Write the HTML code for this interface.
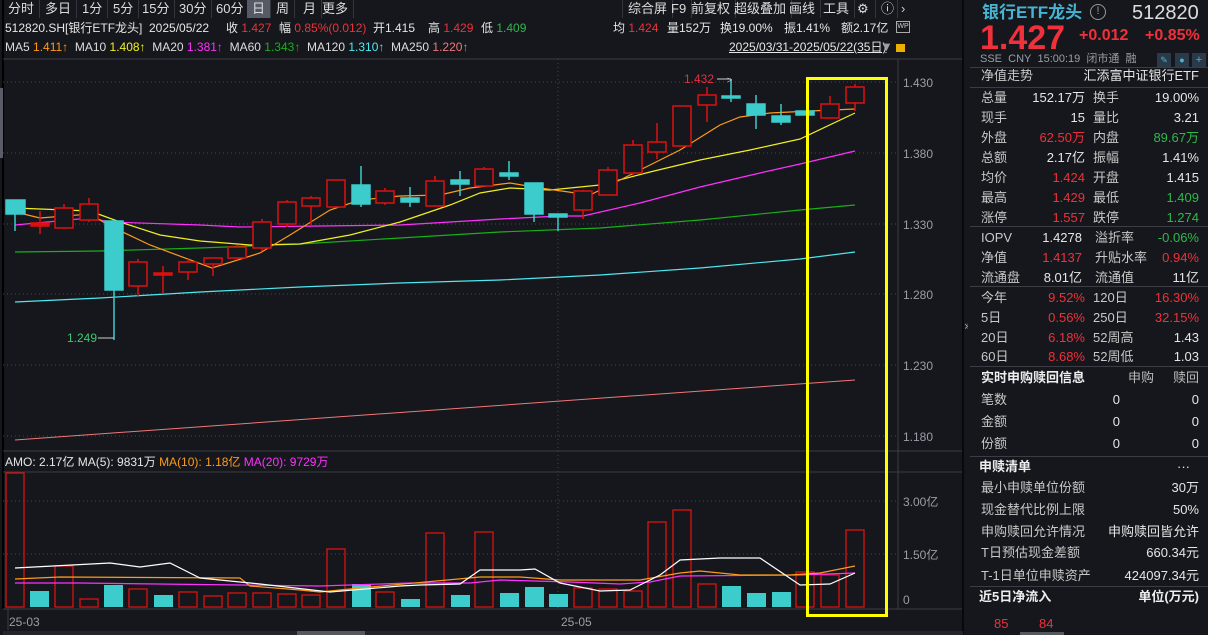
<!DOCTYPE html>
<html><head><meta charset="utf-8">
<style>
*{margin:0;padding:0;box-sizing:border-box}
body{width:1208px;height:635px;background:#15171c;overflow:hidden;position:relative;font-family:"Liberation Sans","Noto Sans CJK SC",sans-serif;font-size:13px;color:#d8d8d8}
.a{position:absolute;white-space:nowrap;line-height:18px}
.r{color:#f0303a}.g{color:#2fb84a}.w{color:#e6e6e6}.gr{color:#9a9ea6}
.r2{font-size:12px}
.tab{position:absolute;top:0;height:18px;line-height:18px;font-size:13px;color:#ddd;border-right:1px solid #33363d;padding:0 5px}
.row{position:absolute;left:970px;width:238px;height:20px;line-height:20px;font-size:13px}
.row span{position:absolute}
.l1{left:11px;color:#c8c8c8}.v1{right:123px;text-align:right}.l2{left:123px;color:#c8c8c8}.v2{right:9px;text-align:right}
.sep{position:absolute;left:970px;width:238px;height:1px;background:#3a3d44}
.b{font-weight:bold;color:#eee}
</style></head><body>
<!-- top tabs -->
<div class="tab" style="left:3px">分时</div>
<div class="tab" style="left:40px">多日</div>
<div class="tab" style="left:77px">1分</div>
<div class="tab" style="left:108px">5分</div>
<div class="tab" style="left:137px">15分</div>
<div class="tab" style="left:174px">30分</div>
<div class="tab" style="left:211px">60分</div>
<div class="tab" style="left:247px;background:#555a66;width:24px">日</div>
<div class="tab" style="left:271px">周</div>
<div class="tab" style="left:298px">月</div>
<div class="tab" style="left:317px">更多</div>
<div class="tab" style="left:622px;border-left:1px solid #33363d">综合屏</div>
<div class="tab" style="left:666px">F9</div>
<div class="tab" style="left:686px">前复权</div>
<div class="tab" style="left:729px">超级叠加</div>
<div class="tab" style="left:784px">画线</div>
<div class="tab" style="left:818px">工具</div>
<div class="tab" style="left:852px;width:24px">⚙</div>
<div class="tab" style="left:876px;width:22px">ⓘ</div>
<div class="a" style="left:901px;top:0;color:#ccc">›</div>
<!-- row2 -->
<div class="a w r2" style="left:5px;top:19px">512820.SH[银行ETF龙头]</div>
<div class="a w r2" style="left:149px;top:19px">2025/05/22</div>
<div class="a w r2" style="left:226px;top:19px">收 <span class="r">1.427</span></div>
<div class="a w r2" style="left:279px;top:19px">幅 <span class="r">0.85%(0.012)</span></div>
<div class="a w r2" style="left:373px;top:19px">开1.415</div>
<div class="a w r2" style="left:428px;top:19px">高 <span class="r">1.429</span></div>
<div class="a w r2" style="left:481px;top:19px">低 <span class="g">1.409</span></div>
<div class="a w r2" style="left:613px;top:19px">均 <span class="r">1.424</span></div>
<div class="a w r2" style="left:667px;top:19px">量152万</div>
<div class="a w r2" style="left:720px;top:19px">换19.00%</div>
<div class="a w r2" style="left:784px;top:19px">振1.41%</div>
<div class="a w r2" style="left:841px;top:19px">额2.17亿</div>
<div class="a" style="left:896px;top:21px;width:14px;height:12px;border:1px solid #aaa;font-size:7px;line-height:10px;text-align:center;color:#ccc">WP</div>
<!-- row3 -->
<div class="a" style="left:5px;top:38px;font-size:12px;color:#ddd">MA5 <span style="color:#ff9a1a">1.411↑</span>&nbsp; MA10 <span style="color:#f0f020">1.408↑</span>&nbsp; MA20 <span style="color:#ff30ff">1.381↑</span>&nbsp; MA60 <span style="color:#18b018">1.343↑</span>&nbsp; MA120 <span style="color:#50e8f0">1.310↑</span>&nbsp; MA250 <span style="color:#f07878">1.220↑</span></div>
<div class="a w" style="left:729px;top:38px;font-size:12px;text-decoration:underline">2025/03/31-2025/05/22(35日)</div>
<div class="a gr" style="left:880px;top:38px">▼</div>
<div class="a" style="left:896px;top:44px;width:9px;height:8px;background:#e8b000"></div>

<svg style="position:absolute;left:0;top:0" width="968" height="635">
<line x1="3" y1="0" x2="3" y2="609" stroke="#000" stroke-width="2"/>
<rect x="0" y="88" width="3" height="70" fill="#5a5d68"/>
<line x1="3" y1="59" x2="962" y2="59" stroke="#3a3d44"/>
<line x1="898" y1="59" x2="898" y2="609" stroke="#3a3d44"/>
<line x1="963" y1="0" x2="963" y2="635" stroke="#08090b" stroke-width="2"/>
<g stroke="#444850" stroke-dasharray="1,3">
<line x1="3" y1="82" x2="898" y2="82"/><line x1="3" y1="153" x2="898" y2="153"/><line x1="3" y1="224" x2="898" y2="224"/><line x1="3" y1="294" x2="898" y2="294"/><line x1="3" y1="365" x2="898" y2="365"/><line x1="3" y1="436" x2="898" y2="436"/>
<line x1="558" y1="59" x2="558" y2="609"/>
<line x1="3" y1="501" x2="898" y2="501"/><line x1="3" y1="554" x2="898" y2="554"/>
</g>
<g fill="#9a9ea6" font-size="12" font-family="Liberation Sans,Noto Sans CJK SC,sans-serif">
<text x="903" y="87">1.430</text><text x="903" y="158">1.380</text><text x="903" y="229">1.330</text><text x="903" y="299">1.280</text><text x="903" y="370">1.230</text><text x="903" y="441">1.180</text>
<text x="903" y="506">3.00亿</text><text x="903" y="559">1.50亿</text><text x="903" y="604">0</text>
<text x="9" y="626">25-03</text><text x="561" y="626">25-05</text>
</g>
<line x1="3" y1="451" x2="962" y2="451" stroke="#3a3d44"/>
<line x1="3" y1="472" x2="962" y2="472" stroke="#3a3d44"/>
<line x1="3" y1="609" x2="962" y2="609" stroke="#3a3d44"/>
<line x1="8" y1="609" x2="8" y2="630" stroke="#3a3d44"/>
<rect x="3" y="631" width="960" height="4" fill="#22252c"/>
<rect x="297" y="631" width="68" height="4" fill="#55585f"/>
<text x="5" y="466" font-size="12" fill="#e6e6e6" font-family="Liberation Sans,Noto Sans CJK SC,sans-serif">AMO: 2.17亿 MA(5): 9831万 <tspan fill="#ff9a1a">MA(10): 1.18亿</tspan> <tspan fill="#ff30ff">MA(20): 9729万</tspan></text>

<polyline fill="none" stroke="#f07878" stroke-width="1" points="15,440 855,380"/>
<polyline fill="none" stroke="#50e8f0" stroke-width="1.2" points="15,302 100,298 200,292 300,287 400,283 500,280 600,275 700,268 800,259 855,252"/>
<polyline fill="none" stroke="#18b018" stroke-width="1.2" points="15,252 100,251 200,248 300,244 400,238 500,232 600,228 700,220 800,210 855,205"/>
<polyline fill="none" stroke="#ff30ff" stroke-width="1.2" points="15,225 90,218 110,222 200,225 240,227 320,226 400,225 450,222 500,219 560,216 583,216 640,203 700,187 760,173 800,164 855,151"/>
<polyline fill="none" stroke="#f0f020" stroke-width="1.2" points="15,208 90,211 120,222 160,235 200,241 250,245 300,244 350,235 400,222 450,205 480,193 510,188 550,190 600,185 650,172 700,160 750,150 800,139 855,113"/>
<polyline fill="none" stroke="#ff9a1a" stroke-width="1.2" points="15,212 40,218 90,214 110,226 150,245 212,268 260,253 290,235 330,210 360,200 400,196 440,195 470,188 510,183 540,188 590,195 640,170 680,150 720,125 740,117 770,113 810,111 855,109"/>

<g stroke="#dd1111" stroke-width="1.5" fill="none">
<line x1="40" y1="211" x2="40" y2="234"/><rect x="31" y="223" width="18" height="3" fill="#dd1111"/>
<line x1="64" y1="204" x2="64" y2="228"/><rect x="55" y="208" width="18" height="20" fill="#15171c"/>
<line x1="89" y1="198" x2="89" y2="222"/><rect x="80" y="204" width="18" height="16" fill="#15171c"/>
<line x1="138" y1="259" x2="138" y2="296"/><rect x="129" y="262" width="18" height="24" fill="#15171c"/>
<line x1="163" y1="266" x2="163" y2="293"/><rect x="154" y="273" width="18" height="2" fill="#dd1111"/>
<line x1="188" y1="259" x2="188" y2="280"/><rect x="179" y="262" width="18" height="10" fill="#15171c"/>
<line x1="213" y1="258" x2="213" y2="276"/><rect x="204" y="258" width="18" height="6" fill="#15171c"/>
<line x1="237" y1="245" x2="237" y2="260"/><rect x="228" y="247" width="18" height="11" fill="#15171c"/>
<line x1="262" y1="219" x2="262" y2="251"/><rect x="253" y="222" width="18" height="26" fill="#15171c"/>
<line x1="287" y1="200" x2="287" y2="227"/><rect x="278" y="202" width="18" height="22" fill="#15171c"/>
<line x1="311" y1="196" x2="311" y2="226"/><rect x="302" y="198" width="18" height="8" fill="#15171c"/>
<rect x="327" y="180" width="18" height="27" fill="#15171c"/>
<line x1="385" y1="188" x2="385" y2="205"/><rect x="376" y="191" width="18" height="12" fill="#15171c"/>
<line x1="435" y1="176" x2="435" y2="206"/><rect x="426" y="181" width="18" height="25" fill="#15171c"/>
<line x1="484" y1="167" x2="484" y2="186"/><rect x="475" y="169" width="18" height="17" fill="#15171c"/>
<line x1="583" y1="190" x2="583" y2="219"/><rect x="574" y="191" width="18" height="19" fill="#15171c"/>
<line x1="608" y1="167" x2="608" y2="195"/><rect x="599" y="170" width="18" height="25" fill="#15171c"/>
<line x1="633" y1="140" x2="633" y2="175"/><rect x="624" y="145" width="18" height="28" fill="#15171c"/>
<line x1="657" y1="123" x2="657" y2="159"/><rect x="648" y="142" width="18" height="10" fill="#15171c"/>
<rect x="673" y="106" width="18" height="40" fill="#15171c"/>
<line x1="707" y1="87" x2="707" y2="122"/><rect x="698" y="95" width="18" height="10" fill="#15171c"/>
<line x1="830" y1="96" x2="830" y2="118"/><rect x="821" y="104" width="18" height="14" fill="#15171c"/>
<line x1="855" y1="84" x2="855" y2="111"/><rect x="846" y="87" width="18" height="16" fill="#15171c"/>
</g>
<g stroke="#3ccccc" stroke-width="1.5" fill="#3ccccc">
<line x1="15" y1="200" x2="15" y2="231"/><rect x="6" y="200" width="19" height="14"/>
<line x1="114" y1="221" x2="114" y2="340"/><rect x="105" y="221" width="18" height="69"/>
<line x1="361" y1="166" x2="361" y2="207"/><rect x="352" y="185" width="18" height="19"/>
<line x1="410" y1="187" x2="410" y2="207"/><rect x="401" y="198" width="18" height="4"/>
<line x1="460" y1="171" x2="460" y2="196"/><rect x="451" y="180" width="18" height="4"/>
<line x1="509" y1="161" x2="509" y2="180"/><rect x="500" y="173" width="18" height="3"/>
<line x1="534" y1="183" x2="534" y2="222"/><rect x="525" y="183" width="18" height="31"/>
<line x1="558" y1="214" x2="558" y2="231"/><rect x="549" y="214" width="18" height="3"/>
<line x1="731" y1="79" x2="731" y2="102"/><rect x="722" y="96" width="18" height="2"/>
<line x1="756" y1="95" x2="756" y2="129"/><rect x="747" y="104" width="18" height="11"/>
<line x1="781" y1="104" x2="781" y2="125"/><rect x="772" y="116" width="18" height="6"/>
<rect x="796" y="111" width="18" height="4"/>
</g>
<g font-size="12" font-family="Liberation Sans,sans-serif">
<text x="684" y="83" fill="#e03040">1.432</text><polyline points="717,79 731,79" stroke="#ccc" fill="none"/><text x="727" y="83" fill="#ccc" font-size="9">&gt;</text>
<text x="67" y="342" fill="#3cc870">1.249</text><polyline points="98,338 114,338" stroke="#ccc" fill="none"/>
</g>

<g stroke="#dd1111" stroke-width="1.3" fill="none">
<rect x="6" y="473" width="18" height="134"/><rect x="55" y="566" width="18" height="41"/><rect x="80" y="599" width="18" height="8"/>
<rect x="129" y="589" width="18" height="18"/><rect x="179" y="592" width="18" height="15"/><rect x="204" y="596" width="18" height="11"/>
<rect x="228" y="593" width="18" height="14"/><rect x="253" y="593" width="18" height="14"/><rect x="278" y="594" width="18" height="13"/>
<rect x="302" y="595" width="18" height="12"/><rect x="327" y="549" width="18" height="58"/><rect x="376" y="592" width="18" height="15"/>
<rect x="426" y="533" width="18" height="74"/><rect x="475" y="532" width="18" height="75"/><rect x="574" y="588" width="18" height="19"/>
<rect x="599" y="589" width="18" height="18"/><rect x="624" y="591" width="18" height="16"/><rect x="648" y="522" width="18" height="85"/>
<rect x="673" y="510" width="18" height="97"/><rect x="698" y="584" width="18" height="23"/><rect x="796" y="572" width="18" height="35"/>
<rect x="821" y="575" width="18" height="32"/><rect x="846" y="530" width="18" height="77"/>
</g>
<g fill="#3ccccc">
<rect x="30" y="591" width="19" height="16"/><rect x="104" y="585" width="19" height="22"/><rect x="154" y="595" width="19" height="12"/>
<rect x="352" y="584" width="19" height="23"/><rect x="401" y="599" width="19" height="8"/><rect x="451" y="595" width="19" height="12"/>
<rect x="500" y="593" width="19" height="14"/><rect x="525" y="587" width="19" height="20"/><rect x="549" y="594" width="19" height="13"/>
<rect x="722" y="586" width="19" height="21"/><rect x="747" y="593" width="19" height="14"/><rect x="772" y="592" width="19" height="15"/>
</g>
<polyline fill="none" stroke="#ff30ff" stroke-width="1.2" points="15,583 80,583 240,585 320,586 410,583 470,583 500,580 570,582 620,584 650,582 680,576 800,575 855,573"/>
<polyline fill="none" stroke="#ff9a1a" stroke-width="1.2" points="15,579 60,577 240,578 250,586 300,590 320,592 360,588 480,577 520,577 560,580 640,580 680,573 700,571 720,573 740,575 790,575 820,573 855,566"/>
<polyline fill="none" stroke="#ffffff" stroke-width="1.2" points="15,568 110,563 140,567 170,563 200,578 260,584 330,592 400,586 420,585 460,584 480,570 520,570 535,569 560,583 600,591 630,590 660,575 680,560 720,558 760,558 800,585 830,584 855,573"/>

<rect x="807.5" y="78.5" width="79" height="537" fill="none" stroke="#ffff00" stroke-width="3"/>
<text x="964" y="330" fill="#aaa" font-size="12" font-family="DejaVu Sans,sans-serif">»</text>
</svg>

<!-- right panel -->
<div class="a" style="left:982px;top:2px;font-size:17px;font-weight:bold;color:#46b4d2;line-height:22px">银行ETF龙头</div>
<div class="a" style="left:1090px;top:4px;width:16px;height:16px;border:1.5px solid #999;border-radius:50%;font-size:11px;line-height:13px;text-align:center;color:#999">!</div>
<div class="a" style="left:1132px;top:1px;font-size:20px;color:#ddd;line-height:24px">512820</div>
<div class="a" style="left:980px;top:20px;font-size:34px;font-weight:bold;color:#f0303a;line-height:36px">1.427</div>
<div class="a" style="left:1079px;top:27px;font-size:16px;font-weight:bold;color:#f0303a">+0.012</div>
<div class="a" style="left:1145px;top:27px;font-size:16px;font-weight:bold;color:#f0303a">+0.85%</div>
<div class="a gr" style="left:980px;top:50px;font-size:11px">SSE&nbsp; CNY&nbsp; 15:00:19&nbsp; 闭市通&nbsp; 融</div>
<div class="a" style="left:1157px;top:53px;width:14px;height:14px;background:#2a3a48;color:#46b4d2;font-size:9px;line-height:14px;text-align:center">✎</div>
<div class="a" style="left:1175px;top:53px;width:14px;height:14px;background:#2a3a48;color:#46b4d2;font-size:9px;line-height:14px;text-align:center">●</div>
<div class="a" style="left:1192px;top:53px;width:14px;height:14px;background:#2a3a48;color:#46b4d2;font-size:11px;line-height:14px;text-align:center">+</div>
<div class="sep" style="top:67px"></div>
<div class="row" style="top:66px"><span class="l1">净值走势</span><span class="v2 w">汇添富中证银行ETF</span></div>
<div class="sep" style="top:87px"></div>
<div class="row" style="top:88px"><span class="l1">总量</span><span class="v1 w">152.17万</span><span class="l2">换手</span><span class="v2 w">19.00%</span></div>
<div class="row" style="top:108px"><span class="l1">现手</span><span class="v1 w">15</span><span class="l2">量比</span><span class="v2 w">3.21</span></div>
<div class="row" style="top:128px"><span class="l1">外盘</span><span class="v1 r">62.50万</span><span class="l2">内盘</span><span class="v2 g">89.67万</span></div>
<div class="row" style="top:148px"><span class="l1">总额</span><span class="v1 w">2.17亿</span><span class="l2">振幅</span><span class="v2 w">1.41%</span></div>
<div class="row" style="top:168px"><span class="l1">均价</span><span class="v1 r">1.424</span><span class="l2">开盘</span><span class="v2 w">1.415</span></div>
<div class="row" style="top:188px"><span class="l1">最高</span><span class="v1 r">1.429</span><span class="l2">最低</span><span class="v2 g">1.409</span></div>
<div class="row" style="top:208px"><span class="l1">涨停</span><span class="v1 r">1.557</span><span class="l2">跌停</span><span class="v2 g">1.274</span></div>
<div class="sep" style="top:226px"></div>
<div class="row" style="top:228px"><span class="l1">IOPV</span><span class="v1 w" style="right:126px">1.4278</span><span class="l2" style="left:125px">溢折率</span><span class="v2 g">-0.06%</span></div>
<div class="row" style="top:248px"><span class="l1">净值</span><span class="v1 r" style="right:126px">1.4137</span><span class="l2" style="left:125px">升贴水率</span><span class="v2 r">0.94%</span></div>
<div class="row" style="top:268px"><span class="l1">流通盘</span><span class="v1 w" style="right:126px">8.01亿</span><span class="l2" style="left:125px">流通值</span><span class="v2 w">11亿</span></div>
<div class="sep" style="top:286px"></div>
<div class="row" style="top:288px"><span class="l1">今年</span><span class="v1 r">9.52%</span><span class="l2">120日</span><span class="v2 r">16.30%</span></div>
<div class="row" style="top:308px"><span class="l1">5日</span><span class="v1 r">0.56%</span><span class="l2">250日</span><span class="v2 r">32.15%</span></div>
<div class="row" style="top:328px"><span class="l1">20日</span><span class="v1 r">6.18%</span><span class="l2">52周高</span><span class="v2 w">1.43</span></div>
<div class="row" style="top:347px"><span class="l1">60日</span><span class="v1 r">8.68%</span><span class="l2">52周低</span><span class="v2 w">1.03</span></div>
<div class="sep" style="top:366px"></div>
<div class="row" style="top:368px"><span class="l1 b">实时申购赎回信息</span><span class="l2" style="left:158px;color:#bbb">申购</span><span class="v2" style="color:#bbb">赎回</span></div>
<div class="row" style="top:390px"><span class="l1">笔数</span><span class="v1 w" style="right:88px">0</span><span class="v2 w">0</span></div>
<div class="row" style="top:412px"><span class="l1">金额</span><span class="v1 w" style="right:88px">0</span><span class="v2 w">0</span></div>
<div class="row" style="top:434px"><span class="l1">份额</span><span class="v1 w" style="right:88px">0</span><span class="v2 w">0</span></div>
<div class="sep" style="top:456px"></div>
<div class="row" style="top:457px"><span class="l1 b" style="left:9px">申赎清单</span><span class="v2 w" style="right:18px">···</span></div>
<div class="row" style="top:478px"><span class="l1">最小申赎单位份额</span><span class="v2 w">30万</span></div>
<div class="row" style="top:500px"><span class="l1">现金替代比例上限</span><span class="v2 w">50%</span></div>
<div class="row" style="top:522px"><span class="l1">申购赎回允许情况</span><span class="v2 w">申购赎回皆允许</span></div>
<div class="row" style="top:543px"><span class="l1">T日预估现金差额</span><span class="v2 w">660.34元</span></div>
<div class="row" style="top:566px"><span class="l1">T-1日单位申赎资产</span><span class="v2 w">424097.34元</span></div>
<div class="sep" style="top:586px"></div>
<div class="row" style="top:587px"><span class="l1 b" style="left:9px">近5日净流入</span><span class="v2 b">单位(万元)</span></div>
<div class="a r" style="left:994px;top:615px">85</div>
<div class="a r" style="left:1039px;top:615px">84</div>
<div class="a" style="left:1020px;top:632px;width:44px;height:3px;background:#55585f"></div>
</body></html>
